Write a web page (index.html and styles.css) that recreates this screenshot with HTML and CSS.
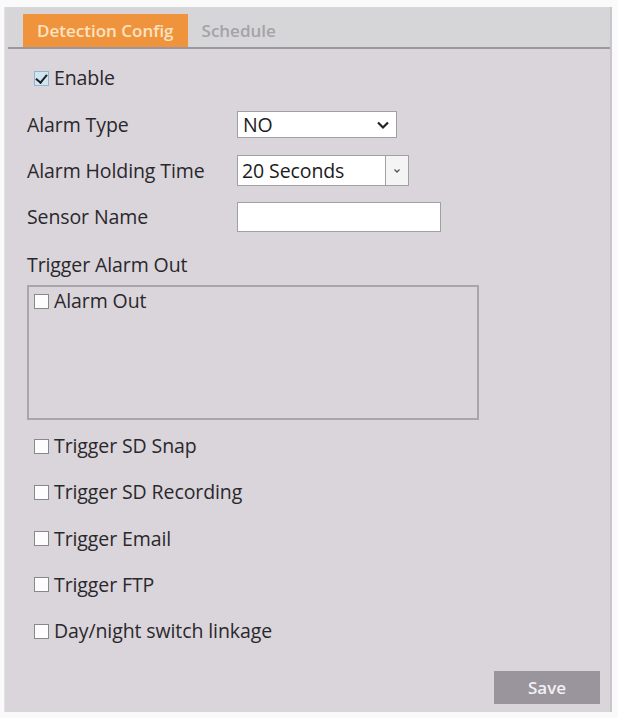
FILE: index.html
```html
<!DOCTYPE html>
<html lang="en">
<head>
  <meta charset="UTF-8" />
  <title>Detection Config</title>
  <link rel="stylesheet" href="styles.css">
</head>
<body>
  <div class="panel">
    <div class="tabs">
      <div class="tab active">Detection Config</div>
      <div class="tab">Schedule</div>
    </div>

    <div class="content">
      <label class="check enable"><span class="box checked"></span>Enable</label>

      <div class="row first">
        <span class="label">Alarm Type</span>
        <div class="select type">NO
          <svg class="chev" width="14" height="10" viewBox="0 0 14 10"><path d="M2 2.5 L7 7.5 L12 2.5" fill="none" stroke="#222" stroke-width="2.2"/></svg>
        </div>
      </div>

      <div class="row">
        <span class="label">Alarm Holding Time</span>
        <div class="select hold">
          <span class="value">20 Seconds</span>
          <span class="drop"><svg width="8" height="6" viewBox="0 0 8 6"><path d="M1.5 1.5 L4 4 L6.5 1.5" fill="none" stroke="#555" stroke-width="1.3"/></svg></span>
        </div>
      </div>

      <div class="row">
        <span class="label">Sensor Name</span>
        <div class="text-input"></div>
      </div>

      <div class="heading">Trigger Alarm Out</div>
      <div class="outbox">
        <label class="check"><span class="box"></span>Alarm Out</label>
      </div>

      <div class="options">
        <label class="check"><span class="box"></span>Trigger SD Snap</label>
        <label class="check"><span class="box"></span>Trigger SD Recording</label>
        <label class="check"><span class="box"></span>Trigger Email</label>
        <label class="check"><span class="box"></span>Trigger FTP</label>
        <label class="check"><span class="box"></span>Day/night switch linkage</label>
      </div>

      <div class="actions">
        <button class="save-btn">Save</button>
      </div>
    </div>
  </div>
</body>
</html>
```

FILE: styles.css
```css
body {
  margin: 0;
  padding: 7px 6px 6px 4px;
  background-color: #fafafa;
  font-family: "Open Sans", "Noto Sans", sans-serif;
  font-size: 19.5px;
  letter-spacing: -0.1px;
  color: #2a282c;
}

.panel {
  height: 705px;
  box-sizing: border-box;
  background-color: #d9d5da;
  border-right: 2px solid #c9c6cb;
  border-left: 1px solid #e4e2e5;
  display: flex;
  flex-direction: column;
}

.tabs {
  display: flex;
  align-items: flex-end;
  height: 40px;
  padding-left: 15px;
  margin-left: 3px;
  background-color: #d6d5d7;
  border-bottom: 2px solid #9b979d;
}

.tab {
  height: 33px;
  line-height: 33px;
  padding: 0 14px;
  font-size: 17px;
  font-weight: 600;
  letter-spacing: 0;
  color: #a6a2a8;
}

.tab.active {
  background-color: #ef943c;
  color: #fde3c2;
}

.content {
  flex: 1;
  display: flex;
  flex-direction: column;
  padding: 0 0 0 22px;
}

.check {
  display: flex;
  align-items: center;
  height: 24px;
  line-height: 24px;
}

.box {
  width: 13px;
  height: 13px;
  margin-right: 5px;
  background-color: #fdfdfd;
  border: 1px solid #8a878c;
  position: relative;
}

.box.checked {
  background-color: #cfe6f2;
  border-color: #8fb6cb;
}

.box.checked::after {
  content: "";
  position: absolute;
  left: 3px;
  top: 0;
  width: 5px;
  height: 9px;
  border: solid #1e1e22;
  border-width: 0 2.5px 2.5px 0;
  transform: rotate(40deg);
}

.enable {
  margin: 17px 0 0 7px;
}

.row {
  display: flex;
  align-items: center;
  height: 31px;
  line-height: 24px;
  margin-top: 15px;
}

.row.first {
  margin-top: 19px;
}

.label {
  width: 210px;
}

.select,
.text-input {
  box-sizing: border-box;
  height: 27px;
  background-color: #fff;
  border: 1px solid #a3a0a5;
  display: flex;
  align-items: center;
  color: #1c1b1e;
}

.select.type {
  width: 160px;
  padding-left: 5px;
  justify-content: space-between;
  padding-right: 6px;
}

.select.hold {
  width: 172px;
  height: 31px;
}

.select.hold .value {
  flex: 1;
  padding-left: 4px;
}

.drop {
  width: 22px;
  height: 100%;
  border-left: 1px solid #a3a0a5;
  display: flex;
  align-items: center;
  justify-content: center;
  background-color: #f4f4f4;
}

.text-input {
  width: 204px;
  height: 30px;
}

.heading {
  margin-top: 21px;
  line-height: 24px;
}

.outbox {
  box-sizing: border-box;
  width: 452px;
  height: 135px;
  margin-top: 8px;
  border: 2px solid #a9a6ab;
  padding: 2px 0 0 5px;
}

.options {
  display: flex;
  flex-direction: column;
  gap: 22.3px;
  margin-top: 14px;
  padding-left: 7px;
}

.actions {
  margin-top: auto;
  display: flex;
  justify-content: flex-end;
  padding: 0 10px 8px 0;
}

.save-btn {
  width: 106px;
  height: 33px;
  border: none;
  background-color: #9a959c;
  color: #f2f0f3;
  font-family: inherit;
  font-size: 17px;
  font-weight: 600;
}
```
